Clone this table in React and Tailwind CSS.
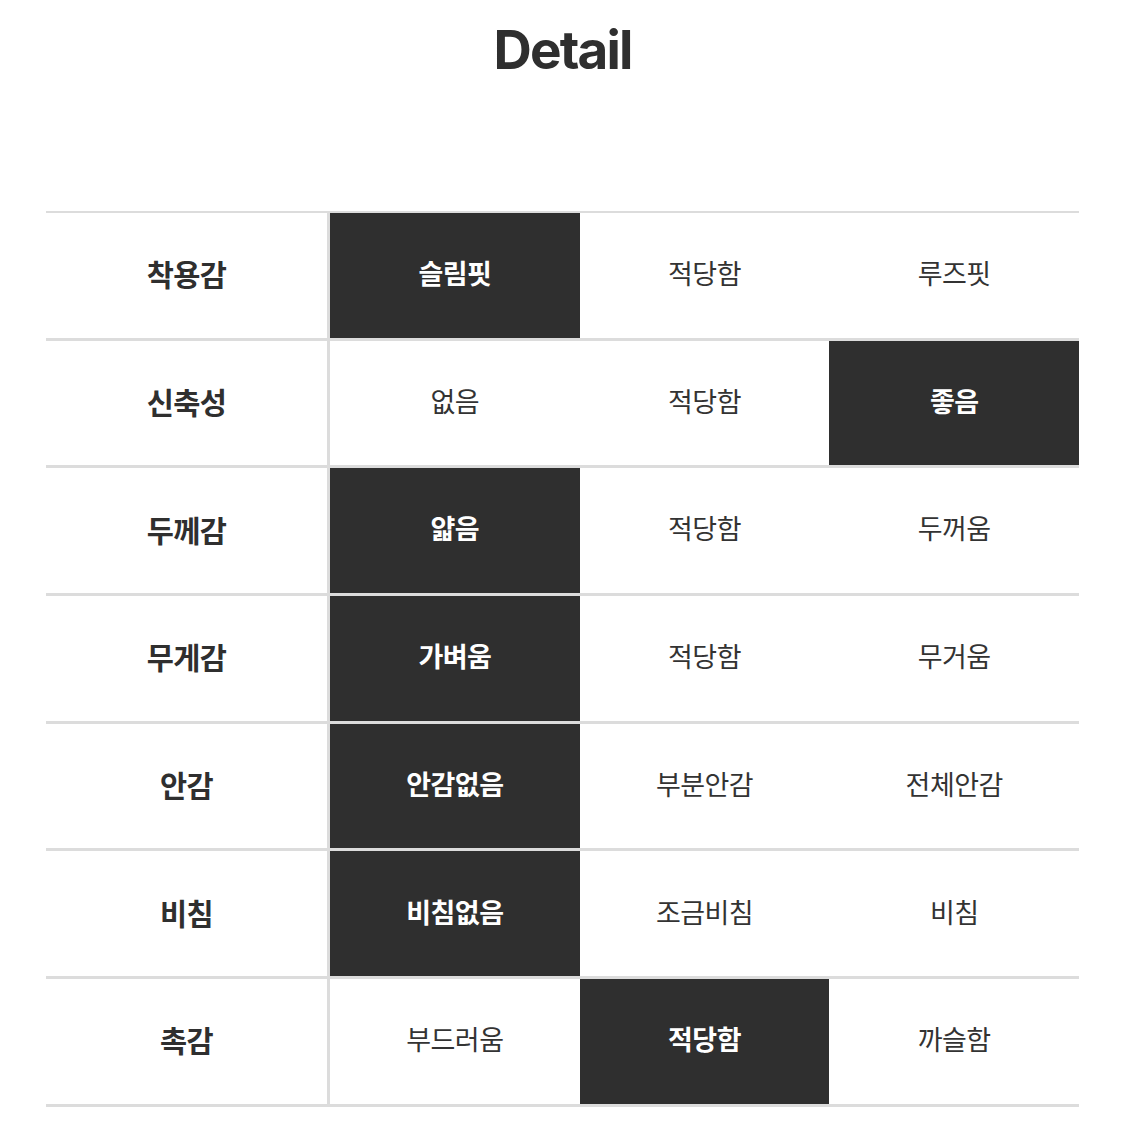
import React from 'react';

const rows = [
  { label: '착용감', options: ['슬림핏', '적당함', '루즈핏'], selected: 0 },
  { label: '신축성', options: ['없음', '적당함', '좋음'], selected: 2 },
  { label: '두께감', options: ['얇음', '적당함', '두꺼움'], selected: 0 },
  { label: '무게감', options: ['가벼움', '적당함', '무거움'], selected: 0 },
  { label: '안감', options: ['안감없음', '부분안감', '전체안감'], selected: 0 },
  { label: '비침', options: ['비침없음', '조금비침', '비침'], selected: 0 },
  { label: '촉감', options: ['부드러움', '적당함', '까슬함'], selected: 1 },
];

const App = () => {
  return (
    <div className="bg-white min-h-[1124px] text-[#333]" style={{ fontFamily: 'Inter, "Noto Sans CJK KR", sans-serif' }}>
      <h1 className="pt-[20px] text-center text-[53px] leading-[60px] font-bold tracking-[-0.035em] text-[#2f2f2f]">
        Detail
      </h1>

      <div className="mx-auto mt-[131px] w-[1033px] border-t-2 border-[#dcdcdc]">
        {rows.map((row) => (
          <div key={row.label} className="flex h-[127.7px] border-b-[3px] border-[#dcdcdc]">
            <div className="w-[284px] flex items-center justify-center border-r-[3px] border-[#dcdcdc] text-[29.5px] font-bold tracking-[-0.02em] text-[#2f2f2f]">
              {row.label}
            </div>
            {row.options.map((opt, i) => (
              <div
                key={opt + i}
                className={`flex-1 flex items-center justify-center text-[27px] tracking-[-0.02em] ${
                  i === row.selected ? 'bg-[#2f2f2f] text-white font-bold' : 'bg-white text-[#333]'
                }`}
              >
                {opt}
              </div>
            ))}
          </div>
        ))}
      </div>
    </div>
  );
};

export default App;
